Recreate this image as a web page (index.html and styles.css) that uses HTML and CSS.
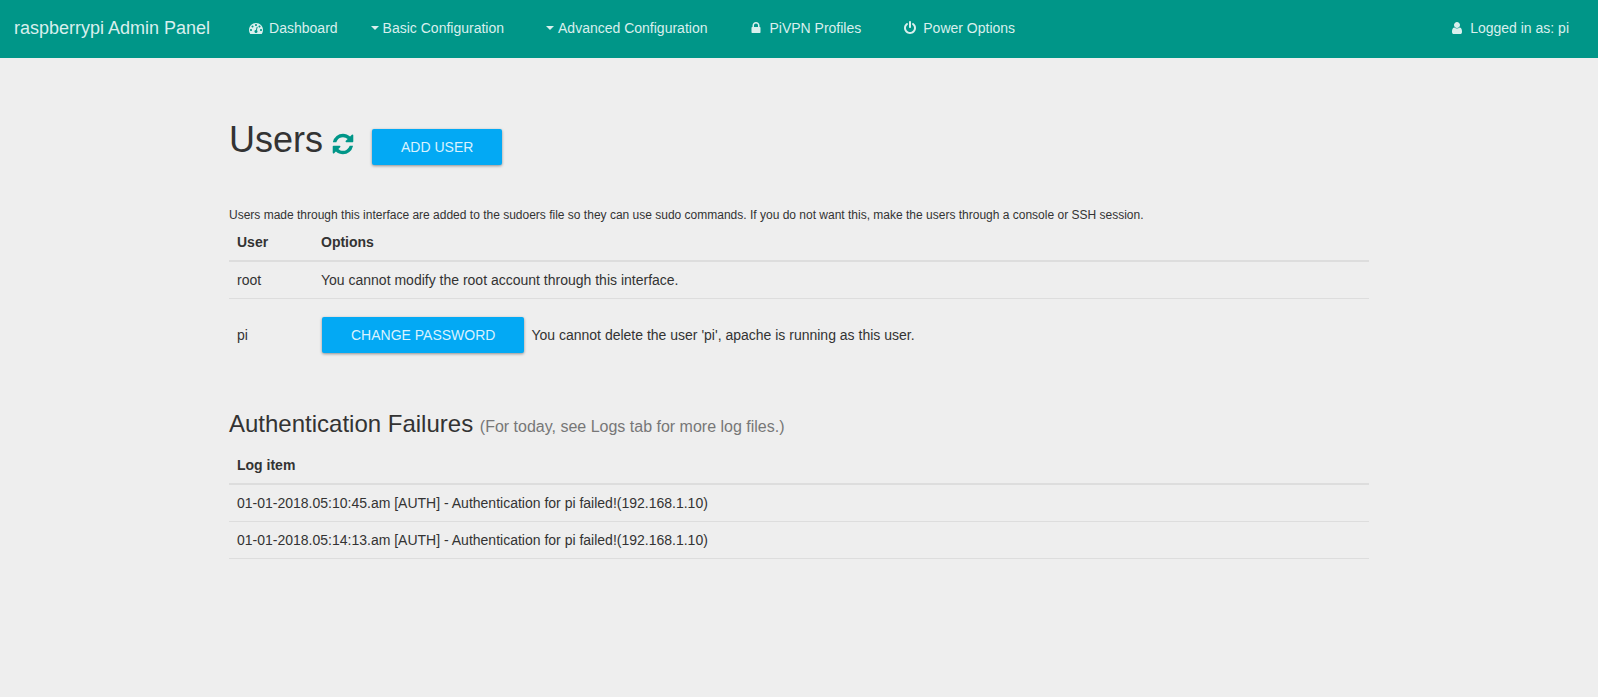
FILE: index.html
```html
<!DOCTYPE html>
<html lang="en">
<head>
<meta charset="utf-8">
<title>raspberrypi Admin Panel</title>
<link rel="stylesheet" href="styles.css">
</head>
<body>
<nav class="navbar">
  <a class="brand" href="#">raspberrypi Admin Panel</a>
  <ul class="menu">
    <li><a class="nav-link" href="#"><svg class="icon" viewBox="0 0 1792 1792" aria-hidden="true"><path d="M384 1152q0-53-37.500-90.500t-90.500-37.500-90.500 37.500-37.500 90.500 37.500 90.500 90.500 37.500 90.500-37.500 37.500-90.500zm192-448q0-53-37.500-90.500t-90.500-37.500-90.500 37.500-37.500 90.500 37.500 90.500 90.500 37.500 90.500-37.500 37.500-90.500zm428 481l101-382q6-26-7.500-48.500t-38.500-29.500-48 6.500-30 39.500l-101 382q-60 5-107 43.500t-63 98.500q-20 77 20 146t117 89 146-20 89-117q16-60-6-117t-72-91zm660-33q0-53-37.500-90.500t-90.500-37.500-90.500 37.500-37.500 90.500 37.500 90.500 90.500 37.500 90.500-37.500 37.500-90.500zm-640-640q0-53-37.500-90.500t-90.500-37.500-90.500 37.500-37.500 90.500 37.500 90.500 90.500 37.500 90.500-37.500 37.500-90.500zm448 192q0-53-37.500-90.500t-90.500-37.500-90.500 37.500-37.500 90.500 37.500 90.500 90.500 37.500 90.500-37.500 37.500-90.500zm320 448q0 261-141 483-19 29-54 29h-1402q-35 0-54-29-141-221-141-483 0-182 71-348t191-286 286-191 348-71 348 71 286 191 191 286 71 348z"/></svg>Dashboard</a></li>
    <li><a class="nav-link dropdown" href="#"><span class="caret"></span>Basic Configuration</a></li>
    <li><a class="nav-link dropdown" href="#"><span class="caret"></span>Advanced Configuration</a></li>
    <li><a class="nav-link" href="#"><svg class="icon" viewBox="0 0 1792 1792" aria-hidden="true"><path d="M640 768h512v-192q0-106-75-181t-181-75-181 75-75 181v192zm832 96v576q0 40-28 68t-68 28h-960q-40 0-68-28t-28-68v-576q0-40 28-68t68-28h32v-192q0-184 132-316t316-132 316 132 132 316v192h32q40 0 68 28t28 68z"/></svg>PiVPN Profiles</a></li>
    <li><a class="nav-link" href="#"><svg class="icon" viewBox="0 0 1792 1792" aria-hidden="true"><path d="M1664 896q0 156-61 298t-164 245-245 164-298 61-298-61-245-164-164-245-61-298q0-182 80.500-343t226.500-270q43-32 95.500-25t83.500 50q32 42 24.500 94.500t-49.500 84.500q-98 74-151.500 181t-53.500 228q0 104 40.500 198.500t109.500 163.500 163.500 109.500 198.500 40.500 198.500-40.500 163.500-109.500 109.500-163.500 40.500-198.500q0-121-53.500-228t-151.500-181q-42-32-49.500-84.500t24.500-94.500q31-43 84-50t95 25q146 109 226.500 270t80.500 343zm-640-768v640q0 52-38 90t-90 38-90-38-38-90v-640q0-52 38-90t90-38 90 38 38 90z"/></svg>Power Options</a></li>
  </ul>
  <a class="nav-link account" href="#"><svg class="icon" viewBox="0 0 1792 1792" aria-hidden="true"><path d="M1536 1399q0 109-62.500 187t-150.500 78h-854q-88 0-150.500-78t-62.500-187q0-85 8.500-160.500t31.500-152 58.500-131 94-89 134.500-34.500q131 128 313 128t313-128q76 0 134.500 34.500t94 89 58.500 131 31.500 152 8.500 160.500zm-256-887q0 159-112.500 271.500t-271.500 112.500-271.500-112.500-112.500-271.500 112.500-271.500 271.500-112.500 271.500 112.500 112.500 271.500z"/></svg>Logged in as: pi</a>
</nav>
<main class="container">
  <header class="page-header">
    <h1 class="title">Users</h1>
    <a class="refresh" href="#" aria-label="Refresh"><svg class="refresh-icon" viewBox="0 0 1792 1792" aria-hidden="true"><path d="M1639 1056q0 5-1 7-64 268-268 434.500t-478 166.500q-146 0-282.500-55t-243.500-157l-129 129q-19 19-45 19t-45-19-19-45v-448q0-26 19-45t45-19h448q26 0 45 19t19 45-19 45l-137 137q71 66 161 102t187 36q134 0 250-65t186-179q11-17 53-117 8-23 30-23h192q13 0 22.500 9.500t9.500 22.500zm25-800v448q0 26-19 45t-45 19h-448q-26 0-45-19t-19-45 19-45l138-138q-148-137-349-137-134 0-250 65t-186 179q-11 17-53 117-8 23-30 23h-199q-13 0-22.500-9.500t-9.500-22.500v-7q65-268 270-434.500t480-166.500q146 0 284 55.500t245 156.500l130-129q19-19 45-19t45 19 19 45z"/></svg></a>
    <button class="btn" type="button">Add user</button>
  </header>
  <p class="note">Users made through this interface are added to the sudoers file so they can use sudo commands. If you do not want this, make the users through a console or SSH session.</p>
  <table class="table">
    <thead><tr><th class="user-col" scope="col">User</th><th scope="col">Options</th></tr></thead>
    <tbody>
      <tr><td>root</td><td>You cannot modify the root account through this interface.</td></tr>
      <tr><td>pi</td><td><div class="options"><button class="btn" type="button">Change password</button><span>You cannot delete the user 'pi', apache is running as this user.</span></div></td></tr>
    </tbody>
  </table>
  <h2 class="subtitle">Authentication Failures <small class="hint">(For today, see Logs tab for more log files.)</small></h2>
  <table class="table log">
    <thead><tr><th scope="col">Log item</th></tr></thead>
    <tbody>
      <tr><td>01-01-2018.05:10:45.am [AUTH] - Authentication for pi failed!(192.168.1.10)</td></tr>
      <tr><td>01-01-2018.05:14:13.am [AUTH] - Authentication for pi failed!(192.168.1.10)</td></tr>
    </tbody>
  </table>
</main>
</body>
</html>
```
FILE: styles.css
```css
* { box-sizing: border-box; }

body {
  margin: 0;
  background: #eee;
  color: #333;
  font: 14px/20px "Liberation Sans", Arial, sans-serif;
}

.navbar {
  display: flex;
  align-items: center;
  min-height: 58px;
  padding: 0 29px 2px 14px;
  background: #009688;
  color: #d9efed;
}

.navbar a { color: inherit; text-decoration: none; }

.brand { font-size: 18px; margin-right: 39px; }

.menu {
  display: flex;
  flex: 1;
  gap: 33px;
  margin: 0;
  padding: 0;
  list-style: none;
}

.menu li + li { margin-right: 9px; }

.nav-link { display: flex; align-items: center; gap: 6px; white-space: nowrap; }
.dropdown { gap: 4px; }

.icon { width: 14px; height: 14px; fill: currentColor; }

.caret {
  border: 4px solid transparent;
  border-top-color: currentColor;
  border-bottom: 0;
}

.container { max-width: 1170px; margin: 0 auto; padding: 61px 15px 0; }

.page-header { display: flex; align-items: baseline; margin-bottom: 32px; }

.title { margin: 0; font-size: 36px; font-weight: 400; line-height: 40px; }

.refresh { margin: 0 16px 0 8px; color: #009688; }
.refresh-icon { width: 24px; height: 24px; fill: currentColor; vertical-align: -4px; }

.btn {
  margin: 10px 1px;
  padding: 8px 29px;
  border: 0;
  border-radius: 2px;
  background: #03a9f4;
  color: #d9f2fe;
  font: inherit;
  text-transform: uppercase;
  box-shadow: 0 1px 3px rgba(0, 0, 0, .4);
  cursor: pointer;
}

.note { margin: 0; font-size: 12px; line-height: 17px; }

.table { width: 100%; border-collapse: separate; border-spacing: 0; }
.table th, .table td { padding: 8px; text-align: left; }
.table th { border-bottom: 2px solid #ddd; }
.table tr + tr td { border-top: 1px solid #ddd; }
.log tr:last-child td { border-bottom: 1px solid #ddd; }
.table .user-col { width: 84px; }

.options { display: flex; align-items: center; gap: 6px; }

.subtitle { margin: 40px 0 7px; font-size: 24px; font-weight: 400; line-height: 26px; }
.hint { color: #777; font-size: 16px; }
```
